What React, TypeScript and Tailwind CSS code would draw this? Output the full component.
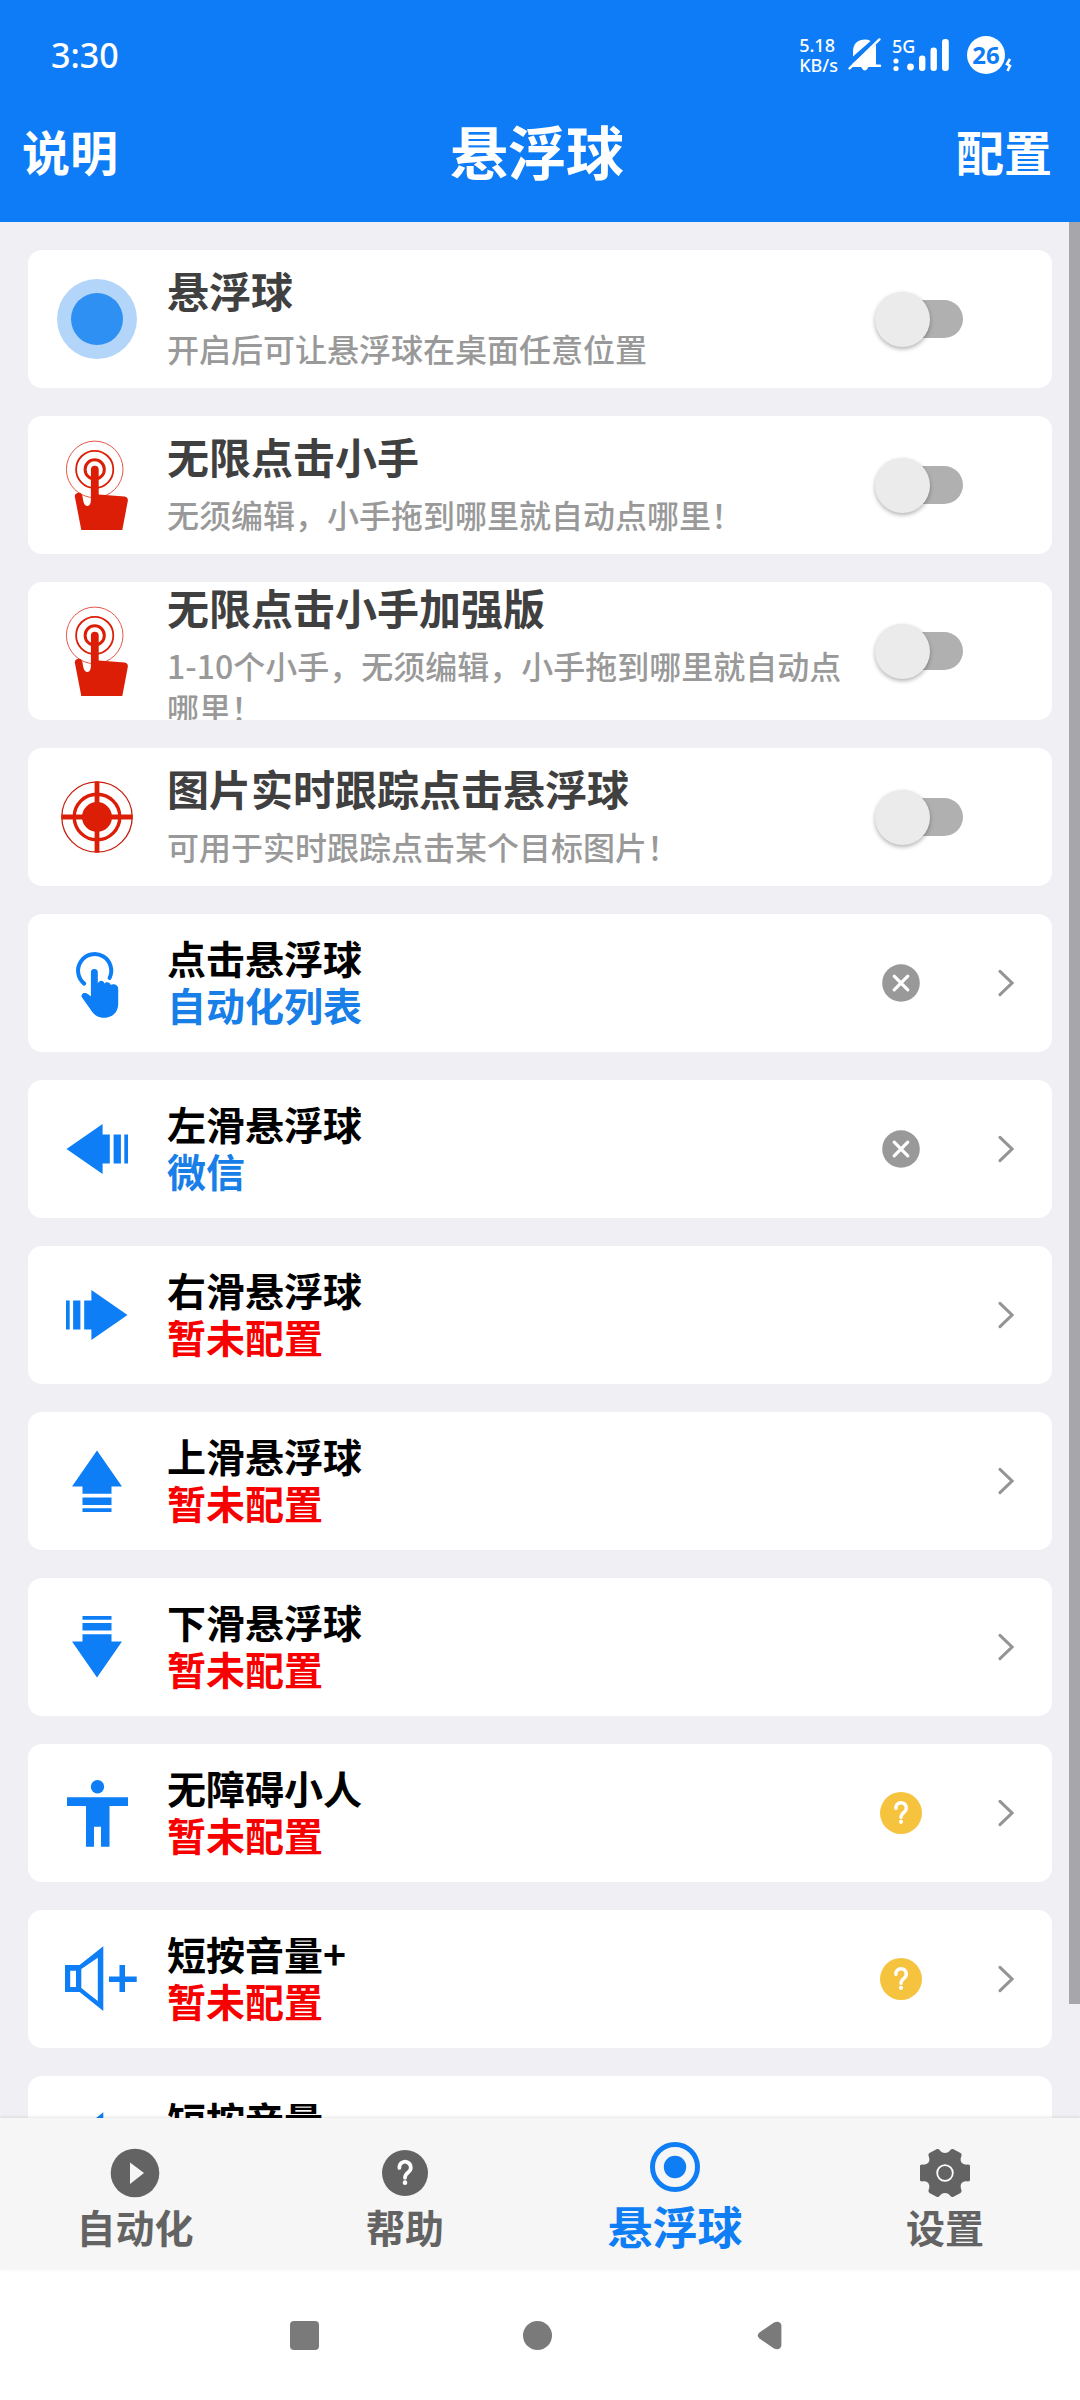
import React, { useState } from 'react';

const ICON_BLUE = '#0d7ef5';
const ICON_RED = '#dc1e07';

const BallIcon: React.FC = () => (
  <svg viewBox="0 0 80 80" className="w-20 h-20">
    <circle cx="40" cy="40" r="40" fill="#b4d5fa" />
    <circle cx="40" cy="40" r="26" fill="#2f90f4" />
  </svg>
);

const TouchIcon: React.FC = () => (
  <svg viewBox="0 0 80 100" className="w-20 h-[100px]" fill="none">
    <circle cx="37.7" cy="34.4" r="28.3" stroke="#e4574a" strokeWidth="1" />
    <circle cx="37.7" cy="34.4" r="18.6" stroke={ICON_RED} strokeWidth="1.8" />
    <circle cx="37.7" cy="34.4" r="9.6" stroke={ICON_RED} strokeWidth="3" />
    <path
      d="M33.9 34.6a3.9 3.9 0 0 1 7.8 0V59.4L67.5 61.4Q71.4 62 70.8 66L65.3 95H24.3L17.8 61.5Q17.8 57.8 22.5 57.8Q25 58.4 25.6 62C26.4 67.5 27.3 71 30.2 71C33 71 33.9 68 33.9 64Z"
      fill={ICON_RED}
    />
  </svg>
);

const TargetIcon: React.FC = () => (
  <svg viewBox="0 0 80 80" className="w-20 h-20" fill="none">
    <circle cx="40" cy="40" r="35.2" stroke="#c8200f" strokeWidth="1.3" />
    <circle cx="40" cy="40" r="22.8" stroke={ICON_RED} strokeWidth="3.4" />
    <circle cx="40" cy="40" r="15" fill={ICON_RED} />
    <path d="M40 4.5V75.5M4.5 40H75.5" stroke={ICON_RED} strokeWidth="4.8" />
  </svg>
);

const TapIcon: React.FC = () => (
  <svg viewBox="0 0 80 80" className="w-20 h-20" fill="none">
    <path d="M27.2 40.6A16.6 16.6 0 1 1 52.6 34.9" stroke={ICON_BLUE} strokeWidth="4" strokeLinecap="round" />
    <path
      d="M33.9 29.4a3.4 3.4 0 0 1 6.9 0V40.5C42 37 46.6 36.6 47.4 40.4C49 38.4 53 38.8 53.8 42C55.8 40.4 61.2 41.4 61.2 45.6V61C61.2 69.6 55 74.8 47 74.8C40.6 74.8 36.6 71.4 33.2 66L25 54.6C23.4 51.4 26.4 49 29.4 50.2Q32 51.4 33.9 53.4Z"
      fill={ICON_BLUE}
    />
  </svg>
);

const ArrowIcon: React.FC<{ rotate?: number }> = ({ rotate = 0 }) => (
  <svg viewBox="0 0 80 80" className="w-20 h-20" fill={ICON_BLUE}>
    <g transform={`rotate(${rotate} 40 40)`}>
      <path d="M9.5 40L45.6 15V25.5H52.8V54.5H45.6V65Z" />
      <path d="M56.6 25.5H63.9V54.5H56.6ZM67.3 25.5H71V54.5H67.3Z" />
    </g>
  </svg>
);

const PersonIcon: React.FC = () => (
  <svg viewBox="0 0 80 80" className="w-20 h-20" fill={ICON_BLUE}>
    <circle cx="40.5" cy="13.7" r="6.7" />
    <path d="M10 24.3H71V33H52.5V73.7H44V53.7H37V73.7H29V33H10Z" />
  </svg>
);

const VolumeIcon: React.FC<{ minus?: boolean }> = ({ minus }) => (
  <svg viewBox="0 0 80 80" className="w-20 h-20" fill={ICON_BLUE}>
    <path
      fillRule="evenodd"
      d="M8 26H22.6L46.3 7.3V72L22.6 53H8ZM13.2 31.7V48H19V31.7ZM24.3 30V49L40.8 62V18.7Z"
    />
    <path d={minus ? 'M52 37.5H79.7V43H52Z' : 'M52 37.5H62.5V26H68V37.5H79.7V43H68V53H62.5V43H52Z'} />
  </svg>
);

const QuestionIcon: React.FC<{ className: string }> = ({ className }) => (
  <svg viewBox="0 0 42 42" className={className} fill="none">
    <circle cx="21" cy="21" r="21" fill="currentColor" />
    <path
      d="M15.9 16.4A5.2 5.2 0 1 1 24.3 20C22.3 21.6 21 22.6 21 25.4"
      stroke="#fff"
      strokeWidth="3.4"
      strokeLinecap="round"
    />
    <circle cx="21" cy="29.8" r="2.1" fill="#fff" />
  </svg>
);

const switchRows = [
  { title: '悬浮球', desc: '开启后可让悬浮球在桌面任意位置', icon: <BallIcon /> },
  { title: '无限点击小手', desc: '无须编辑，小手拖到哪里就自动点哪里！', icon: <TouchIcon /> },
  { title: '无限点击小手加强版', desc: '1-10个小手，无须编辑，小手拖到哪里就自动点哪里！', icon: <TouchIcon /> },
  { title: '图片实时跟踪点击悬浮球', desc: '可用于实时跟踪点击某个目标图片！', icon: <TargetIcon /> },
];

type ActionRow = {
  title: string;
  value?: string;
  icon: React.ReactNode;
  badge?: 'clear' | 'help';
};

const actionRows: ActionRow[] = [
  { title: '点击悬浮球', value: '自动化列表', icon: <TapIcon />, badge: 'clear' },
  { title: '左滑悬浮球', value: '微信', icon: <ArrowIcon />, badge: 'clear' },
  { title: '右滑悬浮球', icon: <ArrowIcon rotate={180} /> },
  { title: '上滑悬浮球', icon: <ArrowIcon rotate={90} /> },
  { title: '下滑悬浮球', icon: <ArrowIcon rotate={-90} /> },
  { title: '无障碍小人', icon: <PersonIcon />, badge: 'help' },
  { title: '短按音量+', icon: <VolumeIcon />, badge: 'help' },
  { title: '短按音量-', icon: <VolumeIcon minus />, badge: 'help' },
];

const StatusBar: React.FC = () => (
  <div className="flex items-center justify-between h-[110px] pl-[51px] pr-[68px] font-['Noto_Sans'] font-medium text-white">
    <span className="text-[34px] leading-10">3:30</span>
    <div className="flex items-center">
      <div className="text-[18px] leading-5 mr-2.5">
        <p>5.18</p>
        <p>KB/s</p>
      </div>
      <svg viewBox="0 0 34 34" className="w-[34px] h-[34px] mr-2.5" fill="#fff">
        <path d="M5 18.5V13C5 6 10 1.6 17 1.6Q20 1.6 22.6 3Z" />
        <path d="M4.6 25.6L28 6.4V26.6H32.5Q34 28 32.5 29H20.5Q17 36 13 29H5Z" />
        <path d="M1.6 30.4L31.4 1.4" stroke="#fff" strokeWidth="2.4" strokeLinecap="round" />
        <path d="M5 23L27 2" stroke="#0d7cf6" strokeWidth="2" />
      </svg>
      <div className="relative mr-[17px]">
        <svg viewBox="0 0 58 34" className="w-[58px] h-[34px]" fill="#fff">
          <circle cx="4" cy="23" r="2.6" />
          <circle cx="4" cy="30.5" r="2.6" />
          <circle cx="18.5" cy="29" r="3.4" />
          <rect x="27" y="17.5" width="6.4" height="15.5" rx="3" />
          <rect x="38.5" y="9.5" width="6.4" height="23.5" rx="3" />
          <rect x="50" y="1" width="6.8" height="32" rx="3" />
        </svg>
        <span className="absolute left-0 top-0 text-[18px] leading-4">5G</span>
      </div>
      <span className="flex items-center justify-center w-[38px] h-[38px] rounded-full bg-white text-[#0d7cf6] text-[24px] font-bold">
        26
      </span>
      <svg viewBox="0 0 7 14" className="w-[7px] h-3.5 mt-5" fill="none">
        <path d="M5 1L2 6L5 8L2.5 13" stroke="#fff" strokeWidth="2.6" />
      </svg>
    </div>
  </div>
);

const SwitchCard: React.FC<{ title: string; desc: string; icon: React.ReactNode }> = ({ title, desc, icon }) => {
  const [on, setOn] = useState(false);

  return (
    <label className="flex [align-items:safe_center] h-[138px] pl-[29px] pr-[89px] bg-white rounded-[14px] overflow-hidden">
      <span className="shrink-0">{icon}</span>
      <span className="flex-1 min-w-0 ml-[30px] mr-4 pb-1">
        <span className="block text-[42px] leading-[50px] font-bold text-[#404040]">{title}</span>
        <span className="block mt-3 text-[32px] leading-[42px] font-medium text-[#999]">{desc}</span>
      </span>
      <input
        type="checkbox"
        role="switch"
        checked={on}
        onChange={() => setOn(!on)}
        className="appearance-none flex items-center shrink-0 w-[88px] h-14 rounded-full before:block before:w-[76px] before:h-[38px] before:ml-3 before:rounded-full before:bg-[#b0b0b0] after:absolute after:w-[55px] after:h-[55px] after:rounded-full after:bg-[#ebebeb] after:shadow-[0_2px_4px_rgba(0,0,0,0.3)] checked:before:bg-[#86bffa] checked:after:ml-8 checked:after:bg-[#0d7cf6]"
      />
    </label>
  );
};

const ActionCard: React.FC<ActionRow> = ({ title, value, icon, badge }) => (
  <div className="flex items-center h-[138px] pl-[29px] pr-[38px] bg-white rounded-[14px]">
    <span className="shrink-0">{icon}</span>
    <a href="#" className="flex-1 min-w-0 ml-[30px] pb-1 text-[39px] leading-[47px] font-bold">
      <span className="block text-black">{title}</span>
      {value ? (
        <span className="block text-[#187ee8]">{value}</span>
      ) : (
        <span className="block text-[#f80000]">暂未配置</span>
      )}
    </a>
    {badge === 'clear' && (
      <button aria-label="清除" className="flex justify-center w-[42px]">
        <svg viewBox="0 0 38 38" className="w-[38px] h-[38px]" fill="none">
          <circle cx="19" cy="19" r="18.8" fill="#999" />
          <path d="M12.2 12.2L25.8 25.8M25.8 12.2L12.2 25.8" stroke="#fff" strokeWidth="3.2" strokeLinecap="round" />
        </svg>
      </button>
    )}
    {badge === 'help' && (
      <button aria-label="帮助" className="w-[42px] text-[#f6c33f]">
        <QuestionIcon className="w-[42px] h-[42px]" />
      </button>
    )}
    <button aria-label="进入" className="ml-[76px]">
      <svg viewBox="0 0 16 28" className="w-4 h-7" fill="none">
        <path d="M2 2.4L14 14L2 25.6" stroke="#949494" strokeWidth="3" strokeLinecap="round" />
      </svg>
    </button>
  </div>
);

const TabBar: React.FC = () => (
  <nav className="relative grid grid-cols-4 h-[152px] bg-[#f6f6f6] text-center text-[#636363] text-[39px] leading-[52px] font-bold shadow-[0_-1px_3px_rgba(0,0,0,0.1)]">
    <a href="#" className="flex flex-col items-center justify-end pb-[18px]">
      <svg viewBox="0 0 50 50" className="w-[50px] h-[50px] mb-0.5">
        <circle cx="25" cy="25" r="24.3" fill="currentColor" />
        <path d="M20 14.5L34 25L20 36Z" fill="#f6f6f6" />
      </svg>
      自动化
    </a>
    <a href="#" className="flex flex-col items-center justify-end pb-[18px]">
      <QuestionIcon className="w-[46px] h-[46px] mb-1" />
      帮助
    </a>
    <a href="#" aria-current="page" className="flex flex-col items-center justify-end pb-[18px] text-[45px] text-[#0f7ef5]">
      <svg viewBox="0 0 50 50" className="w-[50px] h-[50px] mb-2" fill="none">
        <circle cx="25" cy="25" r="22.5" stroke="currentColor" strokeWidth="5" />
        <circle cx="25" cy="25" r="11.2" fill="currentColor" />
      </svg>
      悬浮球
    </a>
    <a href="#" className="flex flex-col items-center justify-end pb-[18px]">
      <svg viewBox="-25 -25 50 50" className="w-[50px] h-[50px] mb-0.5">
        <path
          d="M-8 -24Q-6.5 -24.4 -5.4 -23C-3 -19 3 -19 5.4 -23Q6.5 -24.4 8 -24L15.5 -20Q17 -19 16.4 -17C14.2 -11.5 17 -8 22.5 -8.4Q25.2 -8.2 25.3 -6.5V6.5Q25.2 8.2 22.5 8.4C17 8 14.2 11.5 16.4 17Q17 19 15.5 20L8 24Q6.5 24.4 5.4 23C3 19 -3 19 -5.4 23Q-6.5 24.4 -8 24L-15.5 20Q-17 19 -16.4 17C-14.2 11.5 -17 8 -22.5 8.4Q-25.2 8.2 -25.3 6.5V-6.5Q-25.2 -8.2 -22.5 -8.4C-17 -8 -14.2 -11.5 -16.4 -17Q-17 -19 -15.5 -20Z"
          fill="currentColor"
        />
        <circle r="7.8" fill="none" stroke="#fff" strokeWidth="1.8" />
      </svg>
      设置
    </a>
  </nav>
);

const SystemNav: React.FC = () => (
  <div className="flex items-center justify-center gap-[204px] h-[130px] pr-1.5 bg-white text-[#7a7a7a]">
    <button aria-label="最近任务" className="w-[29px] h-[29px] rounded bg-current" />
    <button aria-label="主屏幕" className="w-[29px] h-[29px] rounded-full bg-current" />
    <button aria-label="返回">
      <svg viewBox="0 0 29 29" className="w-[29px] h-[29px]" fill="currentColor">
        <path d="M3.5 11.4L18 1.4Q24.4 -0.6 25.4 4.5V24.5Q24.4 29.6 18 27.6L3.5 17.6Q0 14.5 3.5 11.4Z" />
      </svg>
    </button>
  </div>
);

const App: React.FC = () => {
  return (
    <div className="flex flex-col h-screen bg-[#f0f0f4] font-['Noto_Sans_CJK_SC',sans-serif]">
      <header className="bg-[#0d7cf6] text-white">
        <StatusBar />
        <div className="grid grid-cols-3 items-center h-28 pl-[22px] pr-7 pb-8 font-bold">
          <button className="justify-self-start text-[48px] leading-[60px]">说明</button>
          <h1 className="text-center text-[58px] leading-[60px]">悬浮球</h1>
          <button className="justify-self-end text-[48px] leading-[60px]">配置</button>
        </div>
      </header>

      <main className="relative flex-1 min-h-0">
        <div className="h-full overflow-y-auto [scrollbar-width:none] p-7 space-y-7">
          {switchRows.map((row) => (
            <SwitchCard key={row.title} {...row} />
          ))}
          {actionRows.map((row) => (
            <ActionCard key={row.title} {...row} />
          ))}
        </div>
        <div className="absolute right-0 top-0 w-[11px] h-[94%] bg-[#a6a6ab]" />
      </main>

      <TabBar />
      <SystemNav />
    </div>
  );
};

export default App;
